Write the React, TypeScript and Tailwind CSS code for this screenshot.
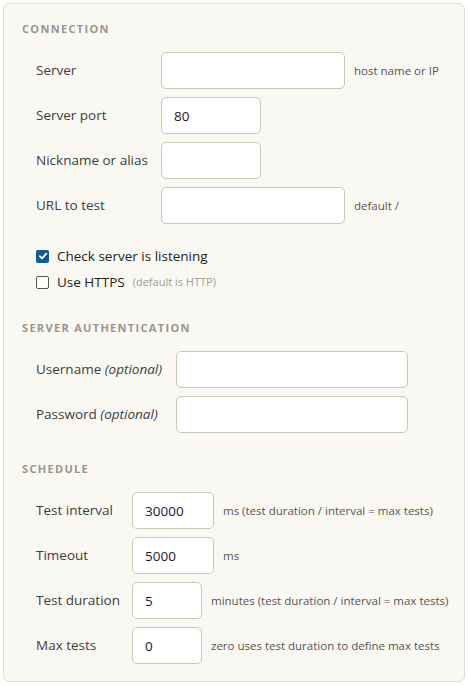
import React from 'react';

const font = { fontFamily: '"Open Sans", "Liberation Sans", sans-serif' };

const SectionTitle = ({ children, className = '' }: { children: React.ReactNode; className?: string }) => (
  <h3 className={`text-[11px] font-bold tracking-[0.12em] text-[#9a958c] leading-[14px] ${className}`}>{children}</h3>
);

type FieldProps = {
  label: React.ReactNode;
  labelWidth: string;
  inputWidth: string;
  value?: string;
  hint?: string;
};

const Field = ({ label, labelWidth, inputWidth, value = '', hint }: FieldProps) => (
  <div className="flex items-center h-[37px]">
    <label className={`${labelWidth} shrink-0 text-[13.5px] text-[#3d3d3d]`}>{label}</label>
    <input
      defaultValue={value}
      className={`${inputWidth} h-[37px] shrink-0 rounded-[5px] border border-[#cdc7b5] bg-white px-[12px] text-[13.5px] text-[#1a1a2e] outline-none`}
    />
    {hint && <span className="ml-[9px] text-[11.5px] text-[#555] whitespace-nowrap">{hint}</span>}
  </div>
);

const Optional = () => <em className="italic">(optional)</em>;

export default function App() {
  return (
    <div className="min-h-screen bg-white p-[3px]" style={font}>
      <div className="w-[462px] h-[679px] rounded-[6px] border border-[#e2ddd2] bg-[#faf8f3] pl-[18px] pt-[18px]">
        <SectionTitle>CONNECTION</SectionTitle>

        <div className="ml-[14px] mt-[16px] flex flex-col gap-[8px]">
          <Field label="Server" labelWidth="w-[125px]" inputWidth="w-[184px]" hint="host name or IP" />
          <Field label="Server port" labelWidth="w-[125px]" inputWidth="w-[100px]" value="80" />
          <Field label="Nickname or alias" labelWidth="w-[125px]" inputWidth="w-[100px]" />
          <Field label="URL to test" labelWidth="w-[125px]" inputWidth="w-[184px]" hint="default /" />
        </div>

        <div className="ml-[14px] mt-[23px] flex flex-col gap-[8px]">
          <label className="flex items-center h-[18px] text-[13.5px] text-[#222]">
            <span className="w-[13px] h-[13px] rounded-[2px] bg-[#0f5b8e] flex items-center justify-center">
              <svg width="10" height="10" viewBox="0 0 10 10">
                <path d="M1.8 5.2 L4 7.4 L8.3 2.6" fill="none" stroke="white" strokeWidth="1.8" strokeLinecap="round" strokeLinejoin="round" />
              </svg>
            </span>
            <span className="ml-[8px]">Check server is listening</span>
          </label>
          <label className="flex items-center h-[18px] text-[13.5px] text-[#222]">
            <span className="w-[13px] h-[13px] rounded-[2px] border border-[#555] bg-white" />
            <span className="ml-[8px]">Use HTTPS</span>
            <span className="ml-[8px] text-[11px] text-[#a09c95]">(default is HTTP)</span>
          </label>
        </div>

        <SectionTitle className="mt-[30px]">SERVER AUTHENTICATION</SectionTitle>

        <div className="ml-[14px] mt-[16px] flex flex-col gap-[8px]">
          <Field label={<>Username <Optional /></>} labelWidth="w-[140px]" inputWidth="w-[232px]" />
          <Field label={<>Password <Optional /></>} labelWidth="w-[140px]" inputWidth="w-[232px]" />
        </div>

        <SectionTitle className="mt-[29px]">SCHEDULE</SectionTitle>

        <div className="ml-[14px] mt-[16px] flex flex-col gap-[8px]">
          <Field label="Test interval" labelWidth="w-[96px]" inputWidth="w-[82px]" value="30000" hint="ms (test duration / interval = max tests)" />
          <Field label="Timeout" labelWidth="w-[96px]" inputWidth="w-[82px]" value="5000" hint="ms" />
          <Field label="Test duration" labelWidth="w-[96px]" inputWidth="w-[70px]" value="5" hint="minutes (test duration / interval = max tests)" />
          <Field label="Max tests" labelWidth="w-[96px]" inputWidth="w-[70px]" value="0" hint="zero uses test duration to define max tests" />
        </div>
      </div>
    </div>
  );
}
